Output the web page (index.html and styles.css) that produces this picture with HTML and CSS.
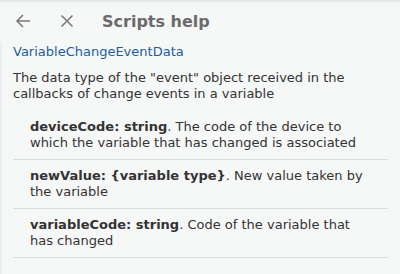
FILE: index.html
```html
<!DOCTYPE html>
<html lang="en">

<head>
    <meta charset="UTF-8">
    <meta name="viewport" content="width=device-width, initial-scale=1.0">
    <title>Scripts help</title>
    <link rel="stylesheet" href="styles.css">
</head>

<body>
    <header class="topbar">
        <button class="icon-btn" title="Back">
            <svg width="16" height="16" viewBox="0 0 16 16">
                <path d="M15 8H2M8 2L2 8l6 6" fill="none" stroke="#7a7a7a" stroke-width="1.6" />
            </svg>
        </button>
        <button class="icon-btn" title="Close">
            <svg width="16" height="16" viewBox="0 0 16 16">
                <path d="M2.5 2.5l11 11M13.5 2.5l-11 11" fill="none" stroke="#7a7a7a" stroke-width="1.6" />
            </svg>
        </button>
        <h1 class="title">Scripts help</h1>
    </header>

    <div class="content">
        <a class="type-link" href="#">VariableChangeEventData</a>
        <p class="desc">The data type of the "event" object received in the callbacks of change events in a variable</p>

        <ul class="props">
            <li><b>deviceCode: string</b>. The code of the device to which the variable that has changed is associated</li>
            <li><b>newValue: {variable type}</b>. New value taken by the variable</li>
            <li><b>variableCode: string</b>. Code of the variable that has changed</li>
        </ul>
    </div>
</body>

</html>
```

FILE: styles.css
```css
* {
    box-sizing: border-box;
}

body {
    margin: 0;
    height: 274px;
    background-color: #f6f7f7;
    font-family: "DejaVu Sans", Verdana, sans-serif;
    color: #333;
    overflow: hidden;
}

.topbar {
    display: flex;
    align-items: center;
    height: 42px;
    padding: 0 0 0 12px;
    box-shadow: inset 0 3px 3px -2px rgba(0, 0, 0, 0.12);
}

.icon-btn {
    display: flex;
    align-items: center;
    justify-content: center;
    width: 22px;
    height: 22px;
    padding: 0;
    margin-right: 22px;
    border: none;
    background: none;
}

.title {
    margin: 0 0 0 2px;
    font-size: 16px;
    font-weight: bold;
    color: #6b6b6b;
}

.content {
    height: 232px;
    padding: 2px 12px 0 11px;
    border-left: 2px solid #eceef6;
}

.type-link {
    display: block;
    font-size: 13px;
    line-height: 16px;
    color: #1d5d9e;
    text-decoration: none;
}

.desc {
    margin: 10px 0 0;
    padding-right: 20px;
    font-size: 13px;
    line-height: 16px;
}

.props {
    margin: 9px 0 0;
    padding: 0;
    list-style: none;
}

.props li {
    padding: 8px 22px 8px 17px;
    font-size: 13px;
    line-height: 16px;
    border-bottom: 1px solid #dcdcdc;
}
```
